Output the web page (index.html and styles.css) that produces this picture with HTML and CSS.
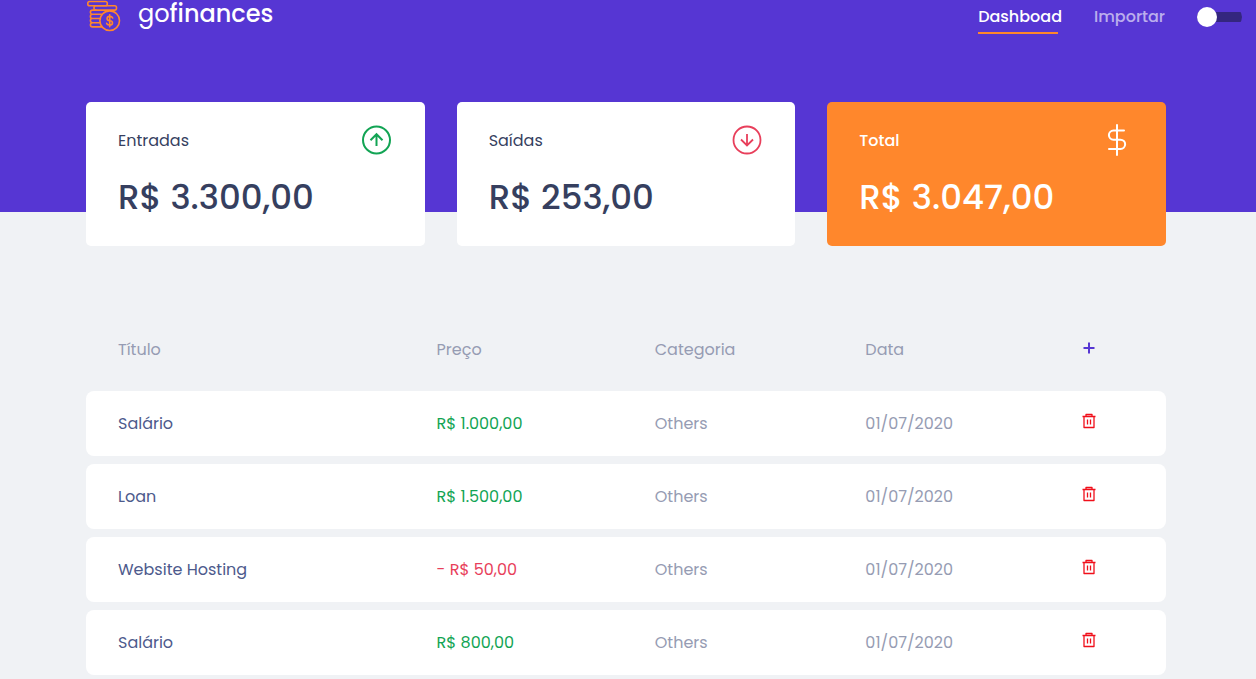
FILE: index.html
```html
<!DOCTYPE html>
<html lang="pt-BR">
<head>
<meta charset="utf-8">
<title>gofinances</title>
<link rel="stylesheet" href="styles.css">
</head>
<body>
<svg class="sprite" aria-hidden="true">
  <symbol id="trash" viewBox="0 0 14 16">
    <path d="M0.5 3.5H13.5M2 3.5V14.5H12V3.5M4 3.5V1.5H10V3.5M5.500 6.500V11.500M8.500 6.500V11.500" fill="none" stroke="currentColor" stroke-width="1.3" stroke-linejoin="round"/>
  </symbol>
</svg>
<header class="header">
  <div class="topbar">
    <a class="logo" href="#">
      <svg class="logo-icon" width="36" height="32" viewBox="0 0 36 32" fill="none" stroke="currentColor" stroke-width="1.600" stroke-linejoin="round" stroke-linecap="round">
        <rect x="1.800" y="1.500" width="19.500" height="4.200" rx="1.800"/>
        <rect x="8" y="5.700" width="22.500" height="4.400" rx="1.800"/>
        <path d="M10 10.100H6.500A2 2 0 0 0 6.500 14.300H15.500M6.500 14.300A2 2 0 0 0 6.500 18.500H13.500M6.500 18.500A2 2 0 0 0 6.500 22.700H13.500M6.500 22.700A2 2 0 0 0 6.500 26.900H15.500"/>
        <circle cx="23.700" cy="20.700" r="9.800"/>
        <path d="M26.700 18C26.200 16.700 25.200 16.400 23.700 16.400C20.200 16.400 20.200 20.700 23.700 20.700C27.400 20.700 27.400 25.100 23.700 25.100C22 25.100 20.900 24.600 20.600 23.200M23.700 14.700V26.700"/>
      </svg>
      <span class="logo-text">go<b>finances</b></span>
    </a>
    <nav class="nav">
      <a class="nav-link active" href="#">Dashboad</a>
      <a class="nav-link" href="#">Importar</a>
    </nav>
    <input class="switch" type="checkbox" role="switch" aria-label="Tema">
  </div>
</header>
<main class="content">
  <section class="cards">
    <article class="card">
      <div class="card-head"><span>Entradas</span>
        <svg class="up" width="32" height="32" viewBox="0 0 32 32" fill="none" stroke="currentColor" stroke-width="2"><circle cx="15.500" cy="16" r="13.500"/><path d="M15.500 22V11M9.500 16.200L15.500 10.200L21.500 16.200"/></svg>
      </div>
      <strong class="amount">R$ 3.300,00</strong>
    </article>
    <article class="card">
      <div class="card-head"><span>Saídas</span>
        <svg class="down" width="32" height="32" viewBox="0 0 32 32" fill="none" stroke="currentColor" stroke-width="1.800"><circle cx="16" cy="16" r="13.500"/><path d="M16 10V21.500M10 15.500L16 21.500L22 15.500"/></svg>
      </div>
      <strong class="amount">R$ 253,00</strong>
    </article>
    <article class="card total">
      <div class="card-head"><span>Total</span>
        <svg width="32" height="32" viewBox="0 0 32 32" fill="none" stroke="currentColor" stroke-width="2" stroke-linecap="round"><path d="M15 1V31M22 6.500H11.500A4.600 4.600 0 0 0 11.500 15.700H18.500A4.600 4.600 0 0 1 18.500 25H7"/></svg>
      </div>
      <strong class="amount">R$ 3.047,00</strong>
    </article>
  </section>
  <table class="transactions">
    <colgroup><col class="col-title"><col class="col-price"><col class="col-category"><col class="col-date"><col></colgroup>
    <thead>
      <tr><th>Título</th><th>Preço</th><th>Categoria</th><th>Data</th>
      <th><button class="icon-button add" type="button" aria-label="Adicionar"><svg width="14" height="16" viewBox="0 0 14 16"><path d="M7 2.500V13.500M1.500 8H12.500" stroke="currentColor" stroke-width="2"/></svg></button></th></tr>
    </thead>
    <tbody>
      <tr><td class="title">Salário</td><td class="income">R$ 1.000,00</td><td>Others</td><td>01/07/2020</td><td><button class="icon-button" type="button" aria-label="Excluir"><svg width="14" height="16"><use href="#trash"/></svg></button></td></tr>
      <tr><td class="title">Loan</td><td class="income">R$ 1.500,00</td><td>Others</td><td>01/07/2020</td><td><button class="icon-button" type="button" aria-label="Excluir"><svg width="14" height="16"><use href="#trash"/></svg></button></td></tr>
      <tr><td class="title">Website Hosting</td><td class="outcome">- R$ 50,00</td><td>Others</td><td>01/07/2020</td><td><button class="icon-button" type="button" aria-label="Excluir"><svg width="14" height="16"><use href="#trash"/></svg></button></td></tr>
      <tr><td class="title">Salário</td><td class="income">R$ 800,00</td><td>Others</td><td>01/07/2020</td><td><button class="icon-button" type="button" aria-label="Excluir"><svg width="14" height="16"><use href="#trash"/></svg></button></td></tr>
    </tbody>
  </table>
</main>
</body>
</html>
```
FILE: styles.css
```css
* { box-sizing: border-box; }
body {
  margin: 0;
  background: #f0f2f5;
  color: #363f5f;
  font: 400 16px/24px Poppins, Inter, sans-serif;
}
.sprite { display: none; }
a { color: inherit; text-decoration: none; }

.header {
  background: #5636d3;
  padding: 0 14px 178px 86px;
  color: #fff;
}
.topbar { display: flex; align-items: flex-start; height: 34px; }
.logo { display: flex; gap: 16px; margin-right: auto; }
.logo-icon { color: #ff872c; }
.logo-text { font-size: 24px; line-height: 28px; }
.logo-text b { font-weight: 500; }
.nav { display: flex; gap: 32px; padding-top: 5px; font-weight: 500; }
.nav-link { height: 29px; opacity: 0.6; }
.nav-link.active {
  opacity: 1;
  background: linear-gradient(#ff872c, #ff872c) left bottom / 80px 2px no-repeat;
}
.switch {
  appearance: none;
  display: flex;
  align-items: center;
  width: 45px;
  height: 20px;
  margin: 7px 0 0 32px;
  background: linear-gradient(#34267f, #34267f) center / 100% 10px no-repeat;
  border-radius: 10px;
}
.switch::before {
  content: "";
  width: 20px;
  height: 20px;
  border-radius: 50%;
  background: #fff;
}

.content { padding: 0 90px 0 86px; margin-top: -110px; }
.cards { display: grid; grid-template-columns: repeat(3, 1fr); gap: 32px; }
.card {
  background: #fff;
  border-radius: 5px;
  padding: 22px 32px;
}
.card-head { display: flex; align-items: center; justify-content: space-between; }
.card-head span { padding-top: 2px; }
.amount {
  display: block;
  margin-top: 14px;
  font-size: 34px;
  line-height: 54px;
  font-weight: 500;
}
.total { background: #ff872c; color: #fff; font-weight: 500; }
.up { color: #12a454; }
.down { color: #e83f5b; }

.transactions {
  width: 100%;
  margin-top: 64px;
  table-layout: fixed;
  border-spacing: 0 8px;
  color: #969cb3;
}
.col-title { width: 29.5%; }
.col-price { width: 20.2%; }
.col-category { width: 19.5%; }
.col-date { width: 20.1%; }
th, td { height: 65px; padding: 0 32px; text-align: left; font-weight: 400; white-space: nowrap; }
th { padding-bottom: 2px; }
td { background: #fff; }
td:first-child { border-radius: 8px 0 0 8px; }
td:last-child { border-radius: 0 8px 8px 0; }
.title { color: #4d5a8c; }
.income { color: #12a454; }
.outcome { color: #e83f5b; }
.icon-button {
  display: flex;
  padding: 0 0 5px;
  border: 0;
  background: none;
  color: #f00f1a;
}
.add { padding-bottom: 4px; color: #5636d3; }
```
